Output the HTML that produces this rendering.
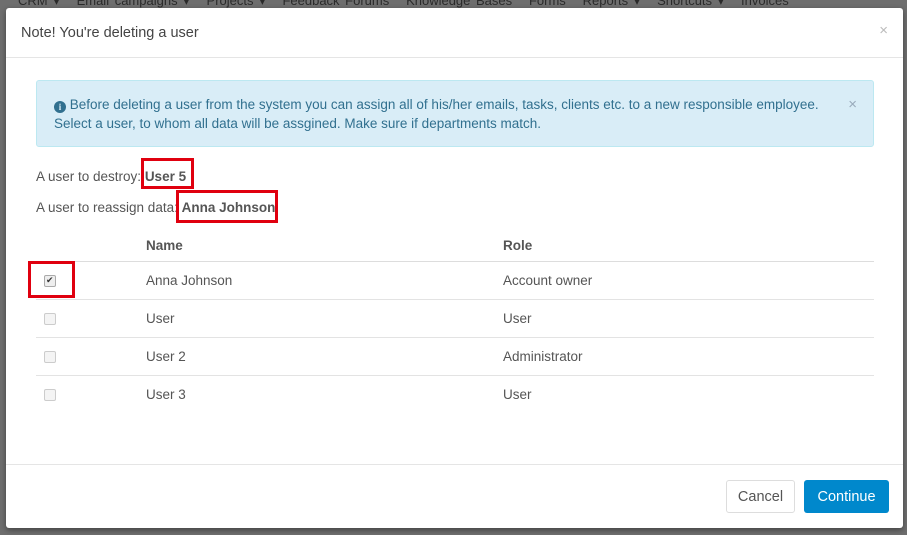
<!DOCTYPE html>
<html><head><style>
*{box-sizing:border-box;margin:0;padding:0}
body{width:907px;height:535px;background:#6e6e6e;font-family:"Liberation Sans",sans-serif;font-size:13.5px;color:#555;position:relative;overflow:hidden}
.nav{position:absolute;top:-7px;left:18px;color:#2a2a2a;font-size:13px;white-space:nowrap;word-spacing:2px}
.modal{position:absolute;left:6px;top:8px;width:897px;height:520px;background:#fff;border-radius:3px;box-shadow:0 2px 6px rgba(0,0,0,.4)}
.hd{height:50px;border-bottom:1px solid #e5e5e5;padding:17px 15px;font-size:14.5px;color:#444;position:relative}
.x{position:absolute;right:15px;top:14px;color:#bbb;font-size:15px}
.alert{position:absolute;left:30px;top:72px;width:838px;height:67px;background:#d9edf7;border:1px solid #bce8f1;border-radius:3px;color:#31708f;padding:14px 17px;line-height:19px;font-size:13.5px}
.alert .c{position:absolute;right:16px;top:14px;color:#9ab;font-size:15px}
.ic{display:inline-block;width:12px;height:12px;border-radius:50%;background:#31708f;color:#d9edf7;font-size:9px;font-weight:bold;text-align:center;line-height:12px;font-family:"Liberation Serif",serif;vertical-align:-1px}
.t{position:absolute;left:30px;font-size:13.5px;color:#555}
b{color:#555}
.box{position:absolute;border:3px solid #e0000f}
.tbl{position:absolute;left:30px;top:222px;width:838px}
.row{height:38px;border-bottom:1px solid #e3e3e3;position:relative;font-size:13.5px}
.row:last-child{border-bottom:none}
.row span{position:absolute;top:11px}
.hdr{height:32px;border-bottom:1px solid #ddd;font-weight:bold}
.hdr span{top:8px}
.cb{position:absolute;left:8px;top:13px;width:12px;height:12px;border:1px solid #ccc;border-radius:2px;background:#f4f4f4}
.ft{position:absolute;left:0;top:456px;width:897px;border-top:1px solid #e5e5e5}
.btn{position:absolute;top:472px;height:33px;border-radius:3px;font-size:14.5px;text-align:center;line-height:33px}
</style></head><body>
<div class="nav">CRM ▾ &nbsp; Email campaigns ▾ &nbsp; Projects ▾ &nbsp; Feedback Forums &nbsp; Knowledge Bases &nbsp; Forms &nbsp; Reports ▾ &nbsp; Shortcuts ▾ &nbsp; Invoices</div>
<div class="modal">
<div class="hd">Note! You're deleting a user<span class="x">×</span></div>
<div class="alert"><span class="ic">i</span> Before deleting a user from the system you can assign all of his/her emails, tasks, clients etc. to a new responsible employee.<br>Select a user, to whom all data will be assgined. Make sure if departments match.<span class="c">×</span></div>
<div class="t" style="top:161px">A user to destroy: <b>User 5</b></div>
<div class="box" style="left:135px;top:150px;width:53px;height:31px"></div>
<div class="t" style="top:192px">A user to reassign data: <b>Anna Johnson</b></div>
<div class="box" style="left:170px;top:182px;width:102px;height:33px"></div>
<div class="tbl">
<div class="row hdr"><span style="left:110px">Name</span><span style="left:467px">Role</span></div>
<div class="row"><div class="cb" style="background:#eee;border-color:#aaa"><span style="position:absolute;left:1px;top:-1px;font-size:9px;line-height:10px;color:#333">✔</span></div><span style="left:110px">Anna Johnson</span><span style="left:467px">Account owner</span></div>
<div class="row"><div class="cb"></div><span style="left:110px">User</span><span style="left:467px">User</span></div>
<div class="row"><div class="cb"></div><span style="left:110px">User 2</span><span style="left:467px">Administrator</span></div>
<div class="row"><div class="cb"></div><span style="left:110px">User 3</span><span style="left:467px">User</span></div>
</div>
<div class="box" style="left:22px;top:253px;width:47px;height:37px"></div>
<div class="ft"></div>
<div class="btn" style="left:720px;width:69px;border:1px solid #ddd;color:#555;line-height:32px">Cancel</div>
<div class="btn" style="left:798px;width:85px;background:#0088cc;color:#fff;line-height:35px">Continue</div>
</div>
</body></html>
